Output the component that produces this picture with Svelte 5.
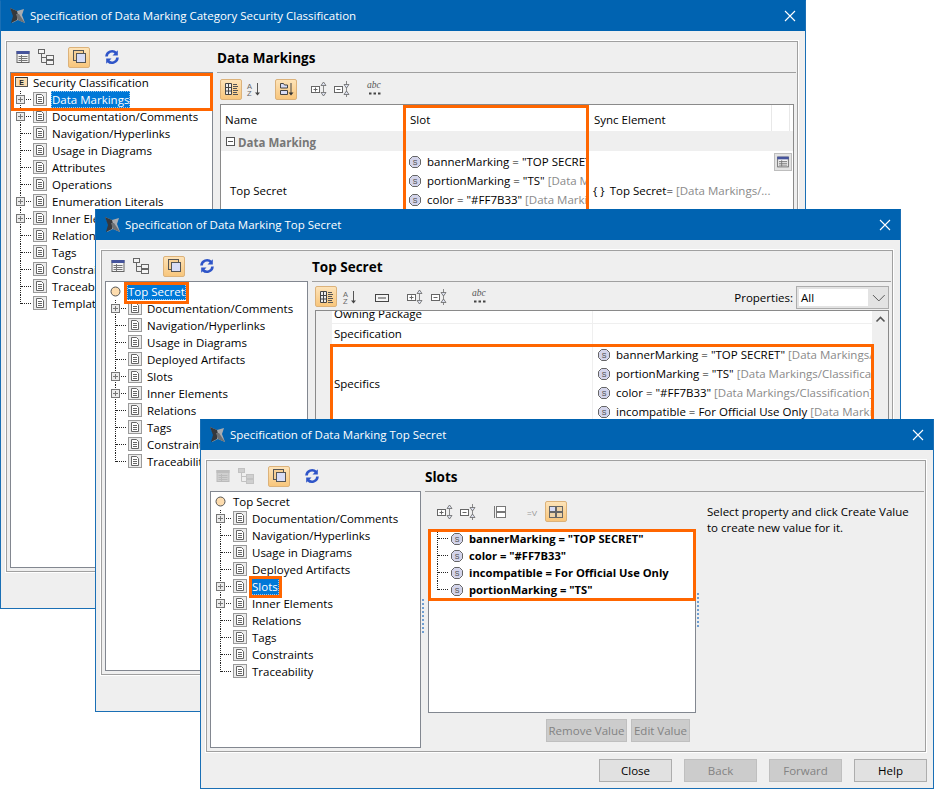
<script>
  const tree1 = [
    {t:'Data Markings',p:1,s:1},{t:'Documentation/Comments',p:1},{t:'Navigation/Hyperlinks'},{t:'Usage in Diagrams'},
    {t:'Attributes'},{t:'Operations'},{t:'Enumeration Literals',p:1},{t:'Inner Elements',p:1},{t:'Relations'},{t:'Tags'},
    {t:'Constraints'},{t:'Traceability'},{t:'Templates'}
  ];
  const tree2 = (sel) => [
    {t:'Documentation/Comments',p:1},{t:'Navigation/Hyperlinks'},{t:'Usage in Diagrams'},{t:'Deployed Artifacts'},
    {t:'Slots',p:1,s:sel},{t:'Inner Elements',p:1},{t:'Relations'},{t:'Tags'},{t:'Constraints'},{t:'Traceability'}
  ];
  const tbLeft = [{n:'table',g:0},{n:'tree',g:1},{n:'copy',g:11,a:1},{n:'refresh',g:11}];
  const tbLeft3 = [{n:'tableoff',g:0},{n:'treeoff',g:1},{n:'copy',g:11,a:1},{n:'refresh',g:11}];
  const tb1 = [{n:'cat',g:0,a:1},{n:'az',g:1},{n:'group',g:10,a:1},{n:'expand',g:11},{n:'collapse',g:1},{n:'abc',g:11}];
  const tb2 = [{n:'cat',g:0,a:1},{n:'az',g:2},{n:'line',g:10},{n:'expand',g:11},{n:'collapse',g:2},{n:'abc',g:19}];
  const tb3 = [{n:'expand',g:0},{n:'collapse',g:1},{n:'struct',g:10},{n:'eqv',g:11},{n:'grid',g:1,a:1}];
  const slots1 = [
    ['bannerMarking = "TOP SECRET"',' [Data Markings/Classification]'],
    ['portionMarking = "TS"',' [Data Markings/Classification]'],
    ['color = "#FF7B33"',' [Data Markings/Classification]']
  ];
  const slots2 = [
    ['bannerMarking = "TOP SECRET"',' [Data Markings/Classification]'],
    ['portionMarking = "TS"',' [Data Markings/Classification]'],
    ['color = "#FF7B33"',' [Data Markings/Classification]'],
    ['incompatible = For Official Use Only ',' [Data Markings/Classification]']
  ];
  const slots3 = ['bannerMarking = "TOP SECRET"','color = "#FF7B33"','incompatible = For Official Use Only','portionMarking = "TS"'];
</script>

{#snippet icon(n)}
  <svg class="ico" width="18" height="18" viewBox="0 0 18 18">
    {#if n==='table' || n==='tableoff'}
      <rect x="3" y="3.500" width="12" height="11" fill={n==='table'?'#f4f4f4':'#cfcfcf'} stroke={n==='table'?'#666':'#bbb'}/>
      <rect x="2.500" y="3" width="13" height="3" fill={n==='table'?'#46549c':'#bdbdbd'}/>
      <path d="M4.500 8.500h9M4.500 10.500h9M4.500 12.500h9M7.500 7v7" stroke={n==='table'?'#777':'#bbb'} fill="none"/>
    {:else if n==='tree' || n==='treeoff'}
      <g fill={n==='tree'?'#f4f4f4':'#cfcfcf'} stroke={n==='tree'?'#666':'#c2c2c2'}>
        <rect x="1.500" y="1.500" width="6" height="4"/><rect x="9.500" y="7.500" width="7" height="4"/><rect x="9.500" y="12.500" width="7" height="4"/>
        <path d="M4.500 5.500v9h5M4.500 9.500h5" fill="none"/>
      </g>
    {:else if n==='copy'}
      <rect x="3.500" y="2.500" width="10" height="10" fill="#f6cf95" stroke="#555"/>
      <rect x="6.500" y="5.500" width="9" height="9" fill="#d7dcf6" stroke="#555"/>
    {:else if n==='refresh'}
      <path d="M3.500 8.500A5.500 5.500 0 0 1 13 5" fill="none" stroke="#2f55c8" stroke-width="2.600"/>
      <path d="M14.800 2.200v5.300h-5.300z" fill="#2f55c8"/>
      <path d="M14.500 9.500A5.500 5.500 0 0 1 5 13" fill="none" stroke="#2f55c8" stroke-width="2.600"/>
      <path d="M3.200 15.800v-5.300h5.300z" fill="#2f55c8"/>
    {:else if n==='cat'}
      <path d="M3.500 3.500h6v11h-6zM3.500 7.500h6M3.500 11h6M6.500 3.500v11" fill="#eee" stroke="#444"/>
      <path d="M11 4.500h4M11 6.500h5M11 8.500h4M11 10.500h5M11 12.500h4M11 14.500h5" stroke="#555"/>
    {:else if n==='az'}
      <text x="2" y="8.500" class="az">A</text><text x="2" y="15.500" class="az">Z</text>
      <path d="M12.500 3v10" stroke="#555"/><path d="M10 12.500h5l-2.500 3z" fill="#444"/>
    {:else if n==='group'}
      <path d="M3.500 3.500h3l1 1.500h3v3h-7zM3.500 10.500h7v4h-7z" fill="#d7dcf6" stroke="#444"/>
      <path d="M14 3v10" stroke="#444"/><path d="M11.500 12.500h5l-2.500 3z" fill="#333"/>
    {:else if n==='expand'}
      <rect x="1.500" y="6.500" width="8" height="6" fill="#fff" stroke="#666"/><path d="M3.500 9.500h4M5.500 7.500v4" stroke="#666"/>
      <path d="M13.500 6v6" stroke="#888"/><path d="M11 5.500l2.500-3.500 2.500 3.500zM11 12.500l2.500 3.500 2.500-3.500z" fill="#dfe3f2" stroke="#666" stroke-width=".8"/>
    {:else if n==='collapse'}
      <rect x="1.500" y="6.500" width="8" height="6" fill="#fff" stroke="#666"/><path d="M3.500 9.500h4" stroke="#666"/>
      <path d="M13.500 1v16" stroke="#888"/><path d="M11 4.500l2.500 3.500 2.500-3.500zM11 14.500l2.500-3.500 2.500 3.500z" fill="#dfe3f2" stroke="#666" stroke-width=".8"/>
    {:else if n==='abc'}
      <text x="1" y="8" class="abc">abc</text>
      <path d="M3 13.500h2.500M7.500 13.500H10M12 13.500h2.500" stroke="#444" stroke-width="2"/>
    {:else if n==='line'}
      <rect x="2.500" y="6.500" width="13" height="7" fill="#f4f4f4" stroke="#444"/><path d="M5 10h8" stroke="#444"/>
    {:else if n==='struct'}
      <path d="M3.500 3v12" stroke="#777"/><rect x="5.500" y="3.500" width="9" height="5" fill="#fff" stroke="#777"/><rect x="5.500" y="9.500" width="9" height="5" fill="#fff" stroke="#777"/>
    {:else if n==='eqv'}
      <text x="3" y="13" class="eqv">=V</text>
    {:else if n==='grid'}
      <rect x="2.500" y="3.500" width="6" height="5" fill="#d7dcf6" stroke="#666"/><rect x="9.500" y="3.500" width="6" height="5" fill="#f0d4a8" stroke="#666"/>
      <rect x="2.500" y="9.500" width="6" height="5" fill="#f0d4a8" stroke="#666"/><rect x="9.500" y="9.500" width="6" height="5" fill="#f0d4a8" stroke="#666"/>
    {/if}
  </svg>
{/snippet}

{#snippet toolbar(items)}
  <div class="toolbar">
    {#each items as it}
      <span class="tb" class:on={it.a} style="margin-left:{it.g}px">{@render icon(it.n)}</span>
    {/each}
  </div>
{/snippet}

{#snippet doc()}
  <svg class="doc" width="14" height="14" viewBox="0 0 14 14">
    <rect x=".5" y=".5" width="13" height="13" fill="#ececec" stroke="#9a9a9a"/>
    <path d="M3.500 2.500h5l2 2v7h-7z" fill="#fff" stroke="#666"/>
    <path d="M5 5.500h4M5 7.500h4M5 9.500h4" stroke="#666"/>
  </svg>
{/snippet}

{#snippet slotIcon()}
  <svg class="slot" width="12" height="12" viewBox="0 0 12 12">
    <path d="M3.500.5h5l3 3v5l-3 3h-5l-3-3v-5z" fill="#d3d4ea" stroke="#666"/>
    <text x="6" y="8.600" class="s">S</text>
  </svg>
{/snippet}

{#snippet treeView(root, items, rootSel, enumRoot)}
  <div class="tree">
    <div class="row root">
      <span class="conn rootconn">
        {#if enumRoot}
          <svg width="13" height="10" viewBox="0 0 13 10" class="enum"><rect x=".5" y=".5" width="12" height="9" fill="#fbdcae" stroke="#555"/><path d="M.5 .5h12" stroke="#333"/><text x="6.500" y="8" class="e">E</text></svg>
        {:else}
          <svg width="11" height="11" viewBox="0 0 11 11" class="circ"><circle cx="5.500" cy="5.500" r="4.500" fill="#fddcae" stroke="#555"/></svg>
        {/if}
      </span>
      <span class="label" class:sel={rootSel}>{root}</span>
    </div>
    {#each items as it, i}
      <div class="row">
        <span class="conn" class:last={i===items.length-1}>
          {#if it.p}<span class="plus"></span>{/if}
        </span>
        {@render doc()}
        <span class="label" class:sel={it.s}>{it.t}</span>
      </div>
    {/each}
  </div>
{/snippet}

{#snippet titleBar(t)}
  <div class="title">
    <svg width="16" height="16" viewBox="0 0 16 16" class="logo">
      <path d="M0 0l7 3 7-2-2 6 3 8-7-3-6 3 2-7z" fill="#a9acb0"/>
      <path d="M0 0l7 3 1 4-1 5-6 3 2-7z" fill="#35383c"/>
      <path d="M6 6l3 0 6 9-7-3z" fill="#6c7074"/>
    </svg>
    <span class="ttext">{t}</span>
    <svg width="12" height="12" viewBox="0 0 12 12" class="x"><path d="M1 1l10 10M11 1L1 11" stroke="#fff" stroke-width="1.100"/></svg>
  </div>
{/snippet}

<div class="desk">
  <section class="win w1">
    {@render titleBar('Specification of Data Marking Category Security Classification')}
    <div class="panel">
      <div class="left">
        {@render toolbar(tbLeft)}
        {@render treeView('Security Classification', tree1, false, true)}
      </div>
      <div class="right">
        <h2>Data Markings</h2>
        <div class="content">
          {@render toolbar(tb1)}
          <div class="table t1">
            <div class="hrow"><span>Name</span><span class="hslot">Slot</span><span class="hsync">Sync Element</span><span></span></div>
            <div class="grp"><span class="minus"></span>Data Marking</div>
            <div class="trow">
              <div class="cell nm">Top Secret</div>
              <div class="cell slots">
                {#each slots1 as s}<div class="sl">{@render slotIcon()}<span>{s[0]}<i>{s[1]}</i></span></div>{/each}
              </div>
              <div class="cell sync"><b class="brace">{'{ }'}</b><span>Top Secret= <i>[Data Markings/...</i></span></div>
              <div class="cell ed"><span class="edbtn">{@render icon('table')}</span></div>
            </div>
          </div>
        </div>
      </div>
    </div>
    <div class="foot"></div>
    <div class="hl a1"></div>
    <div class="hl a2"></div>
  </section>

  <section class="win w2">
    {@render titleBar('Specification of Data Marking Top Secret')}
    <div class="panel">
      <div class="left">
        {@render toolbar(tbLeft)}
        {@render treeView('Top Secret', tree2(false), true, false)}
      </div>
      <div class="right">
        <h2>Top Secret</h2>
        <div class="content">
          <div class="tbwrap">
            {@render toolbar(tb2)}
            <div class="props"><span>Properties:</span>
              <div class="combo"><span class="cv">All</span><svg width="14" height="8" viewBox="0 0 14 8"><path d="M1 1l6 6 6-6" stroke="#555" fill="none"/></svg></div>
            </div>
          </div>
          <div class="table t2">
            <div class="gut"></div>
            <div class="pl">
              <div class="prow clip"><div>Owning Package</div><div></div></div>
              <div class="prow"><div>Specification</div><div></div></div>
              <div class="prow big">
                <div class="mid">Specifics</div>
                <div class="slots s2">
                  {#each slots2 as s}<div class="sl">{@render slotIcon()}<span>{s[0]}<i>{s[1]}</i></span></div>{/each}
                </div>
              </div>
            </div>
            <div class="sb"><svg width="11" height="7" viewBox="0 0 11 7"><path d="M1.500 5.500l4-4 4 4" stroke="#555" stroke-width="1.600" fill="none"/></svg></div>
          </div>
        </div>
      </div>
    </div>
    <div class="foot"></div>
    <div class="hl b1"></div>
    <div class="hl b2"></div>
  </section>

  <section class="win w3">
    {@render titleBar('Specification of Data Marking Top Secret')}
    <div class="panel">
      <div class="left">
        {@render toolbar(tbLeft3)}
        {@render treeView('Top Secret', tree2(true), false, false)}
      </div>
      <div class="right">
        <h2>Slots</h2>
        <div class="body3">
          <div class="col3">
            {@render toolbar(tb3)}
            <div class="list">
              {#each slots3 as s, i}
                <div class="li" class:end={i===slots3.length-1}><span class="lconn"></span>{@render slotIcon()}<b>{s}</b></div>
              {/each}
            </div>
            <div class="btns"><span class="btn off r">Remove Value</span><span class="btn off e">Edit Value</span></div>
          </div>
          <p class="hint">Select property and click Create Value<br>to create new value for it.</p>
        </div>
      </div>
    </div>
    <div class="foot f3">
      <span class="btn">Close</span><span class="btn off">Back</span><span class="btn off">Forward</span><span class="btn">Help</span>
    </div>
    <div class="dots d1"></div>
    <div class="dots d2"></div>
    <div class="hl c1"></div>
    <div class="hl c2"></div>
  </section>
</div>

<style>
  :global(body){margin:0;background:#fff;}
  .desk{position:relative;width:934px;height:789px;overflow:hidden;font:11.5px/17px "Open Sans","Noto Sans",sans-serif;color:#000;}
  .win{position:absolute;box-sizing:border-box;border:1px solid #1a6fb5;border-top:1px solid #0063b1;background:#efefef;display:flex;flex-direction:column;overflow:hidden;}
  .w1{left:0;top:0;width:806px;height:609px;}
  .w2{left:95px;top:209px;width:806px;height:503px;}
  .w3{left:200px;top:419px;width:734px;height:370px;}
  .title{height:30px;flex:none;background:#0063b1;color:#fff;display:flex;align-items:center;padding:0 0 1px 9px;box-sizing:border-box;}
  .logo{margin-right:4px;flex:none;}
  .ttext{flex:1;white-space:nowrap;}
  .x{margin-right:9px;}
  .panel{flex:1;min-height:0;margin:10px 7px 0 5px;border:1px solid #a0a0a0;box-shadow:0 0 0 1px #fff;display:flex;}
  .foot{height:36px;flex:none;}
  .left{width:206px;flex:none;display:flex;flex-direction:column;padding:0 0 3px 3px;box-sizing:border-box;}
  .w3 .left{width:214px;}
  .left .toolbar{height:30px;padding-left:2px;}
  .toolbar{display:flex;align-items:center;flex:none;}
  .tb{width:22px;height:21px;box-sizing:border-box;display:flex;align-items:center;justify-content:center;flex:none;}
  .tb.on{background:linear-gradient(#fde3b8,#f8c67c);border:1px solid #dcb27a;border-radius:2px;}
  .ico{display:block;}
  .tree{flex:1;min-height:0;background:#fff;border:1px solid #828790;padding-top:1px;overflow:hidden;}
  .row{display:flex;align-items:center;height:17px;white-space:nowrap;}
  .conn{position:relative;width:22px;height:17px;flex:none;align-self:stretch;}
  .conn::before{content:"";position:absolute;left:9px;top:0;bottom:0;border-left:1px dotted #222;}
  .conn.last::before{bottom:8px;}
  .conn::after{content:"";position:absolute;left:10px;right:2px;top:8px;border-top:1px dotted #222;}
  .rootconn{width:21px;}
  .rootconn::before,.rootconn::after{display:none;}
  .enum{position:absolute;left:4px;top:3px;}
  .circ{position:absolute;left:4px;top:3px;}
  .plus{position:absolute;z-index:1;left:5px;top:4px;width:9px;height:9px;box-sizing:border-box;border:1px solid #777;background:linear-gradient(#777,#777) center/5px 1px no-repeat,linear-gradient(#777,#777) center/1px 5px no-repeat,#ececec;}
  .doc{flex:none;margin-top:-1px;}
  .label{margin-left:4px;padding:0 1px;height:17px;line-height:17px;}
  .root .label{margin-left:0;}
  .label.sel{background:#0078d7;color:#fff;outline:1px dotted #9cc7ea;outline-offset:-1px;}
  .right{flex:1;min-width:0;display:flex;flex-direction:column;margin-left:4px;padding-right:1px;}
  h2{margin:0;height:31px;flex:none;font:bold 13.5px/32px "Open Sans","Noto Sans",sans-serif;border-bottom:1px solid #a0a0a0;box-sizing:border-box;color:#000;}
  .content{flex:1;min-height:0;padding:0 2px 3px 3px;display:flex;flex-direction:column;}
  .content>.toolbar{height:31px;padding-top:1px;box-sizing:border-box;}
  .tbwrap{height:28px;flex:none;display:flex;justify-content:space-between;align-items:flex-start;padding-top:4px;box-sizing:border-box;}
  .props{display:flex;align-items:center;gap:3px;position:relative;z-index:1;}
  .combo{width:93px;height:23px;box-sizing:border-box;background:#e3e3e3;border:1px solid #acacac;padding:2px;display:flex;align-items:center;gap:4px;}
  .cv{width:71px;background:#fff;height:17px;line-height:17px;padding-left:2px;box-sizing:border-box;}
  .table{flex:1;min-height:0;background:#fff;border:1px solid #8a8a8a;overflow:hidden;}
  .hrow{display:grid;grid-template-columns:183px 185px 183px 18px;height:26px;align-items:center;}
  .hrow span{padding-left:4px;height:26px;line-height:29px;border-right:1px solid #e8e8e8;box-sizing:border-box;}
  .hrow .hslot{padding-left:6px;}
  .hrow .hsync{padding-left:5px;}
  .grp{height:20px;background:#efefef;font-weight:bold;color:#777;display:flex;align-items:center;padding:2px 0 0 5px;box-sizing:border-box;gap:3px;}
  .minus{width:9px;height:9px;box-sizing:border-box;border:1px solid #555;background:linear-gradient(#555,#555) center/5px 1px no-repeat,#fff;margin-top:-2px;}
  .trow{display:grid;grid-template-columns:183px 185px 183px 22px;height:90px;}
  .cell{overflow:hidden;white-space:nowrap;}
  .nm{padding:31px 0 0 9px;}
  .slots{padding:1px 0 0 5px;overflow:hidden;}
  .sl{height:19px;display:flex;align-items:center;gap:6px;white-space:nowrap;}
  .slot{flex:none;}
  i{font-style:normal;color:#8a8a8a;}
  .sync{padding:31px 0 0 4px;display:flex;align-items:flex-start;gap:5px;}
  .brace{font-weight:normal;}
  .ed{padding:2px 0 0 2px;}
  .edbtn{display:flex;width:18px;height:18px;background:#e3e3e3;border:1px solid #bdbdbd;box-sizing:border-box;align-items:center;justify-content:center;}
  .t2{display:flex;}
  .gut{width:16px;flex:none;background:#efefef;}
  .pl{flex:1;min-width:0;}
  .sb{width:16px;flex:none;background:#efefef;text-align:center;padding-top:5px;box-sizing:border-box;}
  .sb svg{display:block;margin:0 auto;}
  .prow{display:grid;grid-template-columns:261px 1fr;height:21px;border-bottom:1px solid #efefef;box-sizing:border-box;}
  .prow>div{padding:0 0 2px 2px;box-sizing:border-box;display:flex;align-items:center;overflow:hidden;white-space:nowrap;}
  .prow>div:first-child{border-right:1px solid #efefef;}
  .prow.clip{height:13px;}
  .prow.clip>div{align-items:flex-end;height:12px;padding-bottom:1px;}
  .prow.big{height:78px;border:0;}
  .prow .s2{display:block;padding:0 0 0 5px;}
  .body3{flex:1;display:flex;min-height:0;}
  .col3{width:268px;flex:none;margin-left:3px;display:flex;flex-direction:column;}
  .col3 .toolbar{height:37px;padding:9px 0 0 6px;align-items:flex-start;box-sizing:border-box;}
  .list{height:184px;box-sizing:border-box;border:1px solid #828790;background:#fff;flex:none;}
  .li{height:17px;display:flex;align-items:center;position:relative;padding-left:22px;gap:6px;white-space:nowrap;}
  .lconn{position:absolute;left:8px;top:0;bottom:0;width:10px;border-left:1px dotted #222;}
  .lconn::after{content:"";position:absolute;left:0;width:10px;top:8px;border-top:1px dotted #222;}
  .li.end .lconn{bottom:8px;}
  .li b{font-weight:bold;font-size:11.2px;}
  .btns{display:flex;justify-content:flex-end;gap:4px;padding:6px 6px 0 0;}
  .btn{box-sizing:border-box;width:73px;height:23px;background:#e1e1e1;border:1px solid #adadad;display:flex;align-items:center;justify-content:center;white-space:nowrap;}
  .btn.off{background:#ccc;border-color:#bfbfbf;color:#838383;}
  .btn.r{width:81px;}
  .btn.e{width:59px;}
  .hint{margin:12px 0 0 11px;line-height:16px;}
  .f3{display:flex;justify-content:flex-end;gap:12px;padding:7px 6px 0 0;box-sizing:border-box;}
  .hl{position:absolute;box-sizing:border-box;border:3px solid #ff6600;pointer-events:none;}
  .a1{left:10px;top:72px;width:202px;height:38px;}
  .a2{left:402px;top:104px;width:186px;height:140px;}
  .b1{left:28px;top:72px;width:65px;height:22px;}
  .b2{left:234px;top:134px;width:544px;height:120px;}
  .c1{left:48px;top:156px;width:33px;height:22px;}
  .c2{left:227px;top:109px;width:268px;height:72px;}
  .dots{position:absolute;width:0;border-left:2px dotted #6d9dd0;}
  .d1{left:221px;top:179px;height:34px;}
  .d2{left:496px;top:173px;height:34px;}
  :global(text.az){font:7.500px "Liberation Sans",sans-serif;fill:#666;}
  :global(text.abc){font:italic 9.500px "Liberation Serif",serif;fill:#555;}
  :global(text.eqv){font:8px "Liberation Sans",sans-serif;fill:#999;}
  :global(text.s){font:7px "Liberation Sans",sans-serif;fill:#444;text-anchor:middle;}
  :global(text.e){font:bold 7px "Liberation Sans",sans-serif;fill:#222;text-anchor:middle;}
</style>
